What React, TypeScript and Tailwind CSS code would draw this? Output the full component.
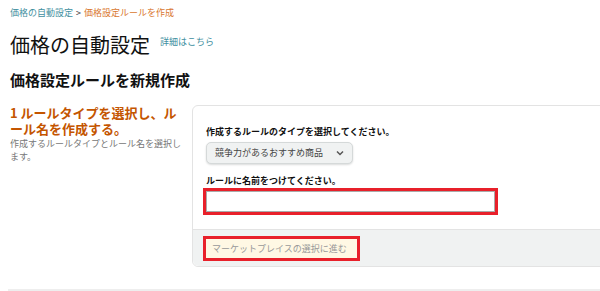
import React from "react";

export default function App(): React.JSX.Element {
  return (
    <div
      className="w-[600px] h-[291px] overflow-hidden bg-white relative"
      style={{ fontFamily: '"Noto Sans CJK JP", "Noto Sans", sans-serif' }}
    >
      <div className="pl-[10px] pt-[6px]">
        <p className="text-[9px] leading-[14px] h-[14px]">
          <span className="text-[#3f8fa0]">価格の自動設定</span>
          <span className="text-[#333] mx-[3px]">&gt;</span>
          <span className="text-[#d9772f]">価格設定ルールを作成</span>
        </p>

        <div className="flex items-end gap-[10px] mt-[12px] h-[26px]">
          <h1 className="text-[20px] leading-[26px] font-normal text-[#111]">価格の自動設定</h1>
          <a className="text-[9px] text-[#3f8fa0] mb-[10px] leading-[12px]">詳細はこちら</a>
        </div>

        <h2 className="text-[15px] leading-[20px] font-bold text-[#111] mt-[12px]">
          価格設定ルールを新規作成
        </h2>
      </div>

      <div className="flex mt-[15px] pl-[10px]">
        <div className="w-[182px] shrink-0">
          <p className="text-[13px] leading-[16px] font-bold text-[#c45500] w-[172px]">
            1 ルールタイプを選択し、ルール名を作成する。
          </p>
          <p className="text-[9px] leading-[13px] text-[#777] w-[172px]">
            作成するルールタイプとルール名を選択します。
          </p>
        </div>

        <div className="flex-1 min-w-[420px] border border-[#e3e3e3] rounded-l-[6px] h-[162px] flex flex-col">
          <div className="flex-1 pl-[13px] pt-[20px]">
            <p className="text-[9px] leading-[12px] font-bold text-[#111]">
              作成するルールのタイプを選択してください。
            </p>
            <div className="mt-[4px] w-[147px] h-[22px] rounded-[5px] bg-[#f0f2f2] border border-[#d5d9d9] shadow-[0_1px_2px_rgba(15,17,17,0.15)] flex items-center justify-between pl-[8px] pr-[8px]">
              <span className="text-[9px] text-[#444]">競争力があるおすすめ商品</span>
              <svg width="8" height="6" viewBox="0 0 8 6">
                <path d="M1 1.5 L4 4.5 L7 1.5" fill="none" stroke="#555" strokeWidth="1.5" />
              </svg>
            </div>
            <p className="text-[9px] leading-[12px] font-bold text-[#111] mt-[11px]">
              ルールに名前をつけてください。
            </p>
            <div className="-ml-[3px] mt-[1px] w-[295px] h-[27px] border-[3px] border-[#e8202a]">
              <div className="w-full h-full border border-[#aaa] bg-white" />
            </div>
          </div>
          <div className="h-[37px] bg-[#f0f2f2] border-t border-[#e3e3e3] rounded-bl-[6px] pl-[10px] pt-[6px]">
            <div className="w-[157px] h-[25px] border-[3px] border-[#e8202a] bg-[#fff8e4] flex items-center pl-[6px]">
              <span className="text-[9px] text-[#999]">マーケットプレイスの選択に進む</span>
            </div>
          </div>
        </div>
      </div>

      <div className="absolute left-[8px] right-0 top-[289px] h-[2px] bg-[#eeeeee]" />
    </div>
  );
}
